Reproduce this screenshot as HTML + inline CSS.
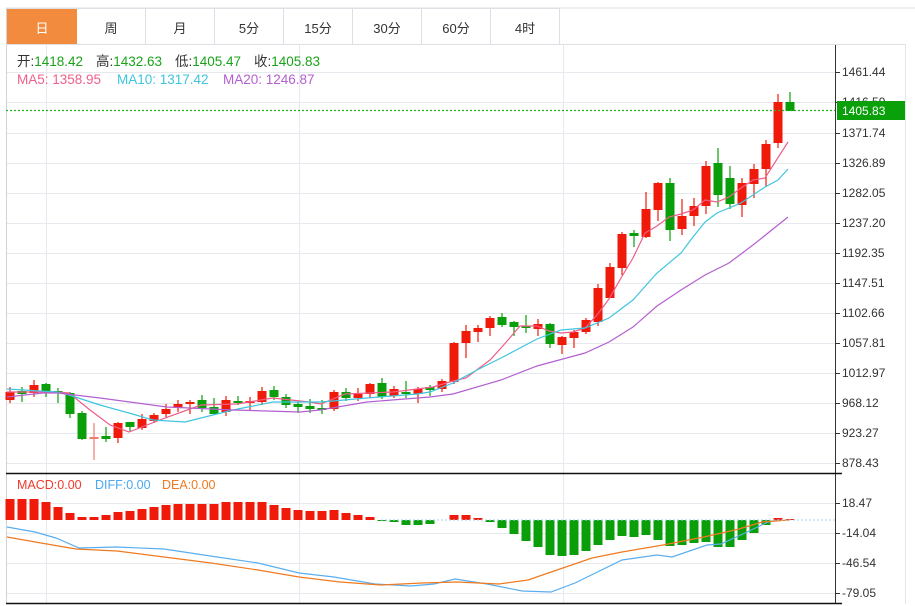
<!DOCTYPE html>
<html><head><meta charset="utf-8"><style>
html,body{margin:0;padding:0;background:#fff;width:915px;height:606px;overflow:hidden}
body{font-family:"Liberation Sans","Noto Sans CJK SC",sans-serif;position:relative}
.tabs{position:absolute;left:7px;top:8px;height:36px;display:flex;border-top:1px solid #dcdfe3}
.tab{width:69px;height:36px;border-right:1px solid #dcdfe3;font-size:13px;color:#333;display:flex;align-items:center;justify-content:center;box-sizing:border-box}
.tab.on{background:#f28b3d;color:#fff;border-right:none;width:70px}
svg{position:absolute;left:0;top:0}
svg text{font-family:"Liberation Sans","Noto Sans CJK SC",sans-serif}
</style></head><body>
<div class="tabs"><div class="tab on">日</div><div class="tab">周</div><div class="tab">月</div><div class="tab">5分</div><div class="tab">15分</div><div class="tab">30分</div><div class="tab">60分</div><div class="tab">4时</div></div>
<svg id="s" width="915" height="606" xmlns="http://www.w3.org/2000/svg">
<line x1="6" y1="8" x2="915" y2="8" stroke="#dcdfe3"/>
<line x1="6.5" y1="8" x2="6.5" y2="604" stroke="#cfd3d8"/>
<line x1="6" y1="44.5" x2="905" y2="44.5" stroke="#dcdfe3"/>
<line x1="905.5" y1="44" x2="905.5" y2="604" stroke="#e3e6ea"/>
<g id="grid" stroke="#e6eaef" stroke-width="1"></g>
<g id="bars"></g>
<g id="cand"></g>
<g id="lines" fill="none" stroke-width="1.2"></g>
<line x1="6" y1="110.5" x2="835" y2="110.5" stroke="#22b022" stroke-width="1.2" stroke-dasharray="2,2"/>
<line x1="381" y1="520" x2="835" y2="520" stroke="#a8d4ee" stroke-dasharray="2,2"/>
<line x1="835.5" y1="45" x2="835.5" y2="604" stroke="#333"/>
<line x1="6" y1="473.5" x2="842" y2="473.5" stroke="#111" stroke-width="1.5"/>
<line x1="6" y1="603.5" x2="842" y2="603.5" stroke="#111" stroke-width="1.5"/>
<g id="ax" font-size="12" fill="#333"></g>
<rect x="837" y="101" width="68" height="19" fill="#0aa00a"/>
<text x="842" y="115" font-size="12" fill="#fff">1405.83</text>
<g font-size="13.5">
<text x="17" y="66" fill="#333">开:<tspan fill="#19a319">1418.42</tspan></text>
<text x="96" y="66" fill="#333">高:<tspan fill="#19a319">1432.63</tspan></text>
<text x="175" y="66" fill="#333">低:<tspan fill="#19a319">1405.47</tspan></text>
<text x="254" y="66" fill="#333">收:<tspan fill="#19a319">1405.83</tspan></text>
<text x="17" y="84" fill="#f0608a">MA5: 1358.95</text>
<text x="117" y="84" fill="#3ec5df">MA10: 1317.42</text>
<text x="223" y="84" fill="#b45fd0">MA20: 1246.87</text>
</g>
<g font-size="12.5">
<text x="17" y="489" fill="#f03a2a">MACD:0.00</text>
<text x="95" y="489" fill="#4aa8f0">DIFF:0.00</text>
<text x="162" y="489" fill="#f07a21">DEA:0.00</text>
</g>
</svg>
<script>
var NS="http://www.w3.org/2000/svg";
function el(p,t,a){var e=document.createElementNS(NS,t);for(var k in a)e.setAttribute(k,a[k]);document.getElementById(p).appendChild(e);return e;}
var ys=[72,102,133,163,193,223,253,283,313,343,373,403,433,463];
var lb=["1461.44","1416.59","1371.74","1326.89","1282.05","1237.20","1192.35","1147.51","1102.66","1057.81","1012.97","968.12","923.27","878.43"];
ys.forEach(function(y,i){el("grid","line",{x1:7,y1:y+.5,x2:835,y2:y+.5});el("ax","line",{x1:835,y1:y+.5,x2:840,y2:y+.5,stroke:"#333"});var t=el("ax","text",{x:842,y:y+4});t.textContent=lb[i];});
[[503,"18.47"],[533,"-14.04"],[563,"-46.54"],[593,"-79.05"]].forEach(function(a){el("grid","line",{x1:7,y1:a[0]+.5,x2:835,y2:a[0]+.5});el("ax","line",{x1:835,y1:a[0]+.5,x2:840,y2:a[0]+.5,stroke:"#333"});var t=el("ax","text",{x:842,y:a[0]+4});t.textContent=a[1];});
[46,299,563].forEach(function(x){el("grid","line",{x1:x+.5,y1:45,x2:x+.5,y2:603});});
var R="#f01a0a",G="#0a9f0a";
var C=[[392,400,387,403,R],[391,394,387,402,G],[385,393,380,397,R],[384,392,383,397,G],[391,393,388,403,G],[393,414,392,418,G],[413,439,411,440,G],[437,439,423,460,"#f07a70"],[436,439,427,442,G],[423,438,422,443,R],[422,427,422,432,G],[419,428,414,430,R],[415,421,413,423,R],[409,414,404,417,R],[404,408,400,412,R],[402,404,400,414,R],[400,408,395,412,G],[407,414,398,414,G],[400,412,396,416,R],[401,402,396,405,G],[401,402,397,411,R],[391,402,387,405,R],[390,397,386,400,G],[397,405,394,408,G],[404,407,402,413,G],[406,409,399,413,G],[408,409,400,414,G],[392,409,390,411,R],[392,398,388,401,G],[394,398,388,401,R],[384,394,383,398,R],[383,397,378,399,G],[389,396,386,398,R],[392,394,381,398,G],[389,394,387,403,R],[387,390,385,396,G],[381,389,379,392,R],[343,382,342,384,R],[331,343,325,358,R],[328,332,325,342,R],[318,328,316,336,R],[317,325,313,327,G],[322,327,321,336,G],[326,328,315,333,G],[324,329,319,336,R],[324,344,323,348,G],[337,345,336,354,R],[332,338,330,348,R],[320,332,318,334,R],[288,322,284,326,R],[267,298,263,298,R],[234,268,232,275,R],[233,236,230,247,G],[209,237,192,238,R],[183,210,182,221,R],[183,230,178,241,G],[216,229,199,235,R],[206,216,198,226,R],[166,206,161,214,R],[163,195,148,207,G],[178,204,166,209,G],[183,205,178,217,R],[169,184,164,198,R],[144,169,140,186,R],[102,143,94,148,R],[102,111,92,111,G]];
C.forEach(function(c,i){var x=10+12*i;el("cand","line",{x1:x,y1:c[2],x2:x,y2:c[3],stroke:c[4],"stroke-width":1.2});el("cand","rect",{x:x-4.5,y:c[0],width:9,height:Math.max(2,c[1]-c[0]),fill:c[4]});});
var B=[499,499,499,502,507,513,517,517,515,512,511,509,507,505,504,504,504,504,502,502,502,502,505,508,510,511,511,510,513,515,517,521,522,525,525,524,520,515,515,518,522,528,534,541,547,555,556,555,551,545,540,536,537,535,540,546,545,543,542,547,547,540,533,525,518,519];
B.forEach(function(y,i){var x=10+12*i-4.5;if(y<520)el("bars","rect",{x:x,y:y,width:9,height:520-y,fill:R});else if(y>520)el("bars","rect",{x:x,y:520,width:9,height:y-520,fill:G});});
function pl(pts,c){el("lines","polyline",{points:pts.map(function(p){return p.join(",")}).join(" "),stroke:c});}
pl([[7,392],[57,392],[69,393],[90,410],[110,425],[129,432],[165,418],[201,405],[237,404],[273,398],[309,402],[321,404],[345,394],[393,392],[433,387],[453,381],[466,378],[490,360],[501,348],[520,326],[537,326],[549,331],[561,333],[573,332],[585,328],[597,315],[609,299],[621,278],[633,258],[645,233],[657,226],[669,217],[681,214],[693,210],[705,200],[717,202],[729,197],[741,188],[753,180],[765,178],[788,142]],"#ef5c8a");
pl([[7,389],[57,392],[69,395],[100,405],[129,413],[153,420],[185,422],[213,415],[233,410],[273,402],[297,402],[321,402],[333,401],[367,398],[417,394],[430,392],[453,383],[477,370],[501,358],[537,339],[561,330],[585,328],[609,318],[633,300],[657,273],[681,253],[693,237],[705,222],[717,213],[741,203],[765,187],[778,180],[788,169]],"#3ec5df");
pl([[7,397],[43,393],[58,393],[100,398],[167,407],[233,410],[300,412],[320,410],[367,402],[430,397],[453,394],[501,380],[537,366],[585,353],[609,342],[633,327],[657,306],[681,290],[705,275],[729,263],[753,245],[788,217]],"#b45fd0");
pl([[7,527],[35,532],[56,538],[79,548],[117,547],[164,549],[217,557],[258,563],[299,573],[334,577],[375,584],[411,586],[434,584],[455,579],[487,584],[522,591],[551,592],[575,583],[622,560],[657,555],[672,557],[707,545],[721,544],[745,533],[768,522],[780,520]],"#5aaeef");
pl([[7,537],[41,543],[76,549],[117,551],[164,557],[211,563],[258,570],[299,577],[340,582],[381,585],[422,583],[457,582],[499,584],[528,580],[557,570],[592,558],[622,552],[663,545],[704,537],[739,529],[762,522],[789,520]],"#f07a21");
</script>
</body></html>
